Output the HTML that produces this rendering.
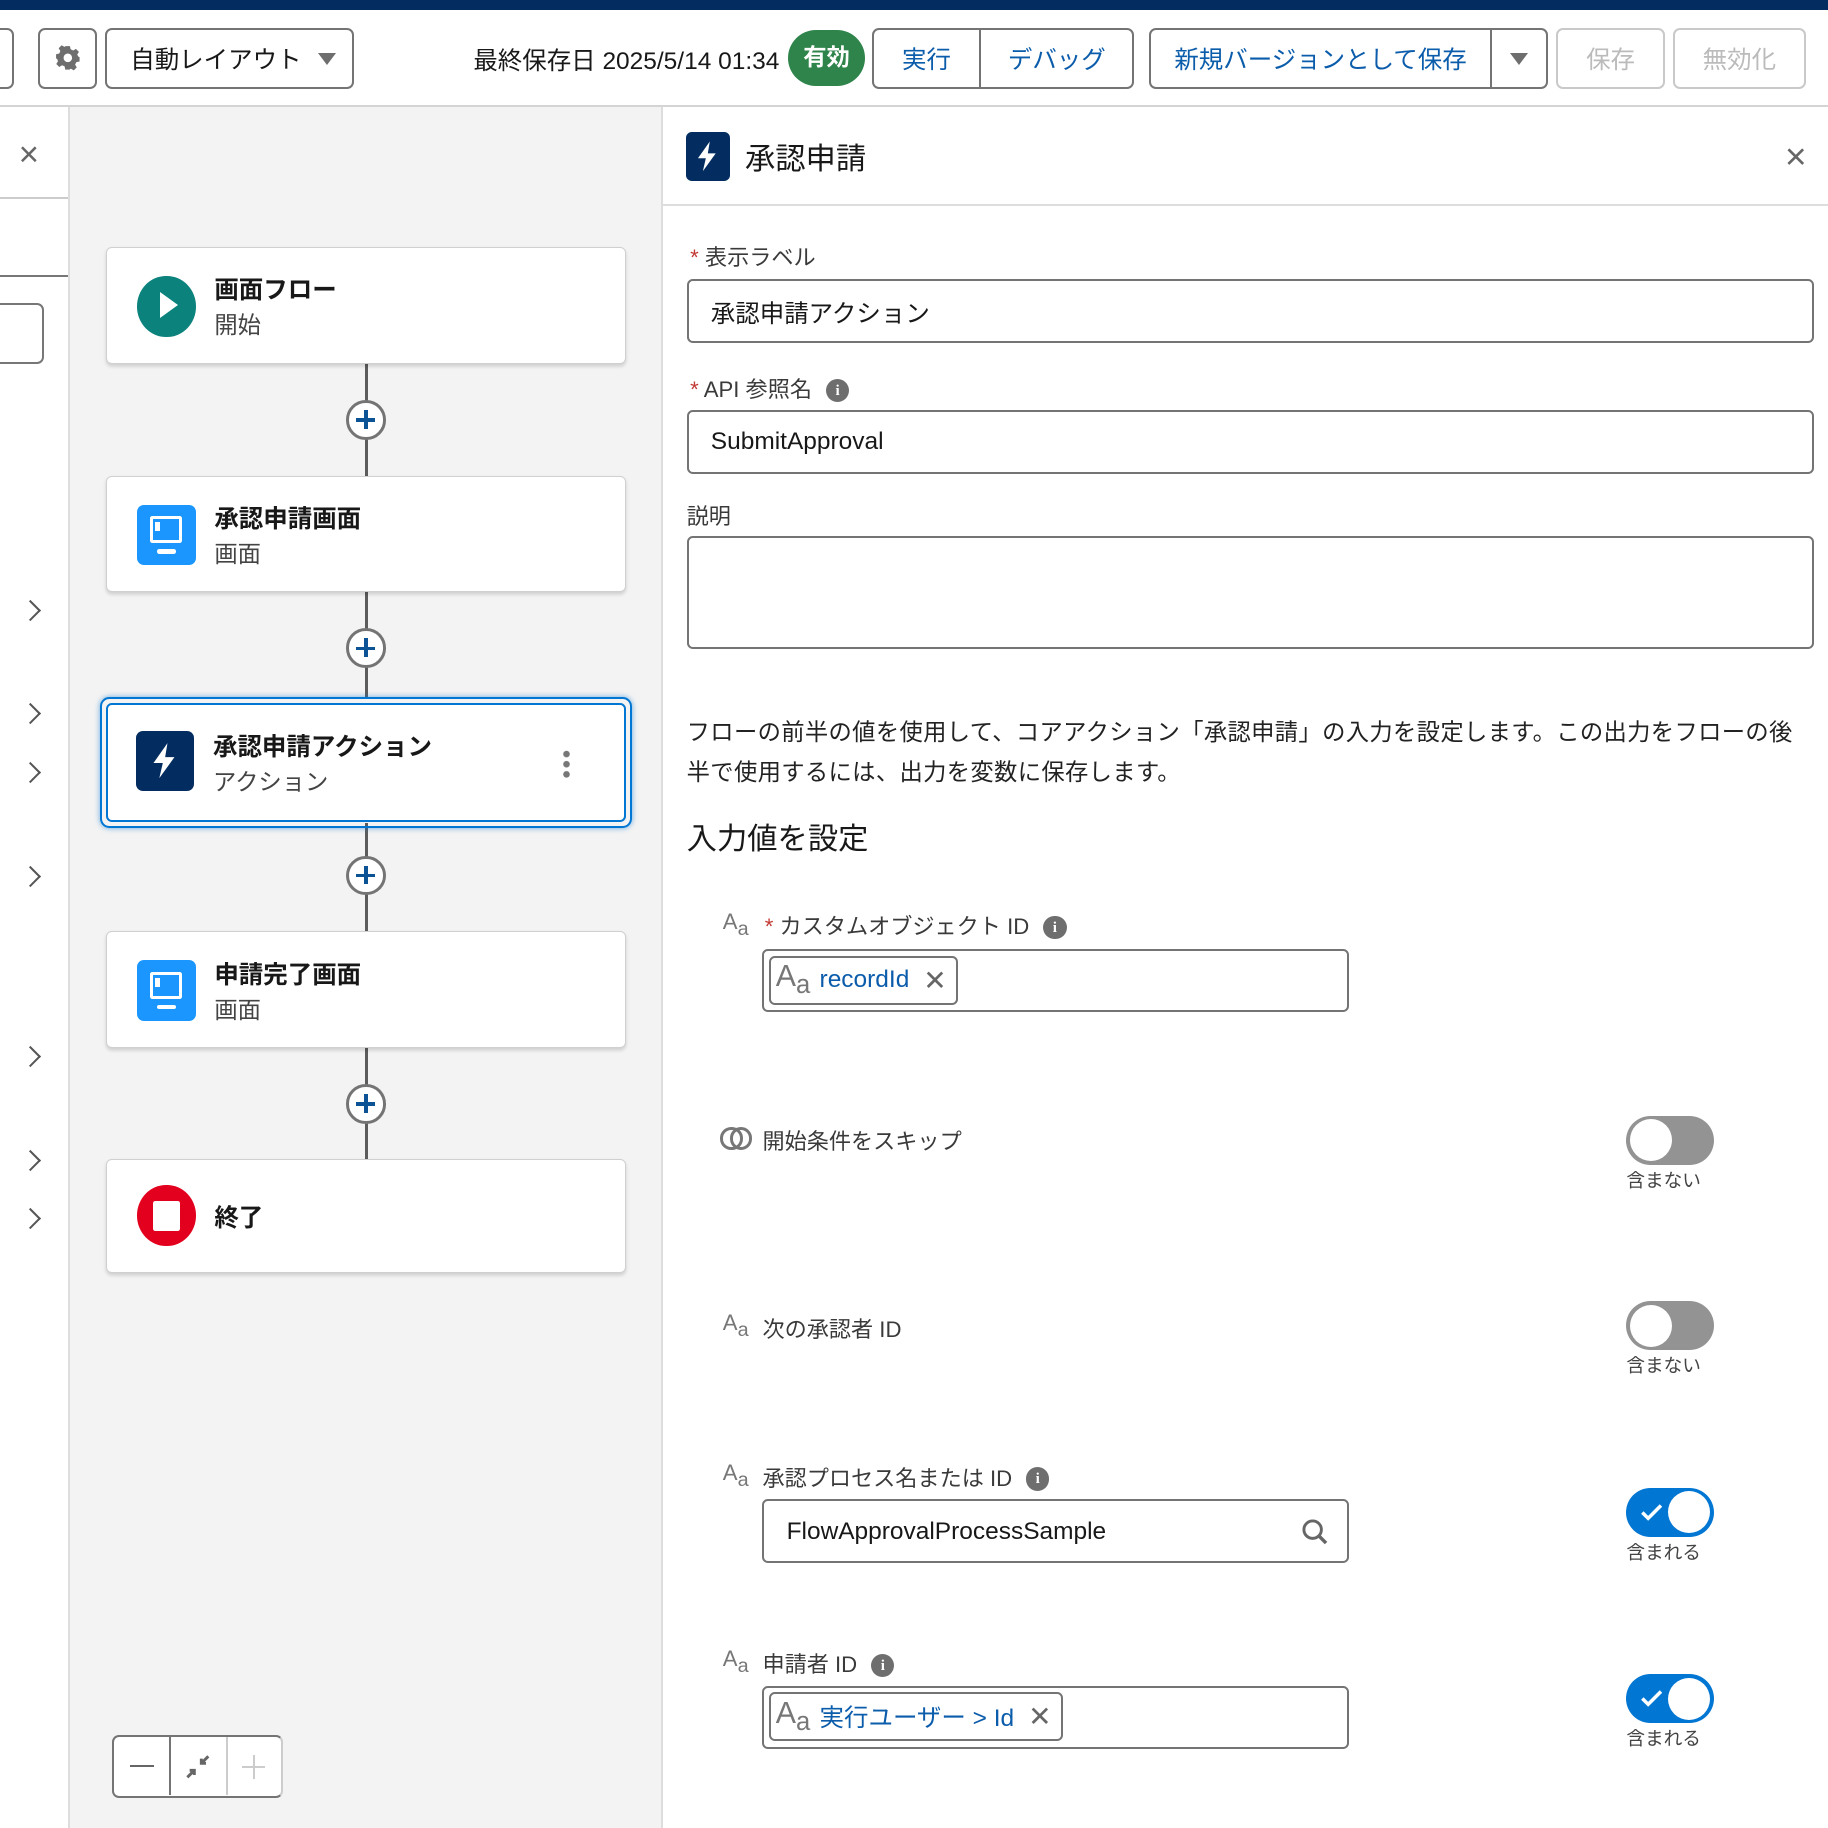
<!DOCTYPE html>
<html><head><meta charset="utf-8"><style>
html,body{margin:0;padding:0;width:1828px;height:1828px;overflow:hidden;background:#fff}
#w{zoom:1.16582;position:relative;width:1568px;height:1568px;font-family:"Liberation Sans","Noto Sans CJK JP",sans-serif;color:#181818}
.a{position:absolute}
.btn{position:absolute;border:2px solid #747474;border-radius:6px;background:#fff;box-sizing:border-box;display:flex;align-items:center;justify-content:center;font-size:21px}
.card{position:absolute;left:91px;width:446px;height:100px;background:#fff;border:1px solid #d0d0d0;border-radius:5px;box-shadow:0 2px 3px rgba(0,0,0,.15);box-sizing:border-box}
.card .t{position:absolute;left:92px;top:20px;font-size:21px;font-weight:bold}
.card .s{position:absolute;left:92px;top:50px;font-size:20px;color:#444}
.ic{position:absolute;left:26px;top:24px;width:50px;height:52px;border-radius:6px}
.line{position:absolute;left:313px;width:3px;background:#5c5c5c}
.plus{position:absolute;left:297px;width:34px;height:34px;border:3px solid #747474;border-radius:50%;background:#fff;box-sizing:border-box}
.plus:before{content:"";position:absolute;left:6px;top:13px;width:16px;height:3px;background:#0b5394}
.plus:after{content:"";position:absolute;left:13px;top:6px;width:3px;height:16px;background:#0b5394}
.chev{position:absolute;left:24px;width:11px;height:11px;border-right:2px solid #555;border-top:2px solid #555;transform:rotate(45deg)}
.inp{position:absolute;border:2px solid #747474;border-radius:5px;box-sizing:border-box;background:#fff}
.lbl{position:absolute;font-size:19px;color:#3a3a3a}
.aa{position:absolute;font-size:19px;color:#777}
.aa sub{font-size:17px;vertical-align:-5px}
.info{display:inline-block;width:20px;height:20px;border-radius:50%;background:#6e6e6e;color:#fff;font-size:13px;font-weight:bold;text-align:center;line-height:20px;vertical-align:2px;margin-left:12px;font-family:"Liberation Serif",serif}
.tg{position:absolute;left:1395px;width:75px;height:42px;border-radius:21px;background:#939393}
.tg:after{content:"";position:absolute;left:3px;top:3px;width:36px;height:36px;border-radius:50%;background:#fff}
.tg.on{background:#0176d3}
.tg.on:after{left:36px}
.tl{position:absolute;left:1395px;font-size:16px;color:#444}
.pill{position:absolute;left:4px;top:4px;height:42px;border:2px solid #747474;border-radius:5px;box-sizing:border-box;display:flex;align-items:center;padding:0 8px 0 4px;font-size:21px;color:#0b5cab}
.pill .A{color:#777;font-size:26px;margin-right:8px}
.pill .A sub{font-size:22px;vertical-align:-6px}
.pill .x{color:#666;margin-left:12px;font-size:24px}
</style></head><body><div id="w">
<div class="a" style="left:0;top:0;width:1568px;height:9px;background:#032d60"></div>
<div class="a" style="left:0;top:90px;width:1568px;height:2px;background:#d4d4d4"></div>
<div class="btn" style="left:-10px;top:24px;width:22px;height:52px"></div>
<div class="btn" style="left:33px;top:24px;width:50px;height:52px"><svg width="22" height="22" viewBox="0 0 24 24"><path fill="#6e6e6e" d="M10 1h4l.6 3 2.4 1.2 2.6-1.6 2.8 2.8-1.6 2.6L22 11v0l1 .4v4l-3 .6-1.2 2.4 1.6 2.6-2.8 2.8-2.6-1.6L14 22.6 13.6 23h-4l-.6-3-2.4-1-2.6 1.6-2.8-2.8 1.6-2.6L2 13l-1-.4v-4l3-.6 1-2.4-1.6-2.6L6.2 .2l2.6 1.6zM12 8a4 4 0 100 8 4 4 0 000-8z"/></svg></div>
<div class="btn" style="left:90px;top:24px;width:214px;height:52px;justify-content:flex-start;padding-left:20px">自動レイアウト<span style="position:absolute;right:14px;top:20px;border-left:8px solid transparent;border-right:8px solid transparent;border-top:11px solid #6e6e6e"></span></div>
<div class="a" style="left:406px;top:36px;font-size:21px">最終保存日 2025/5/14 01:34</div>
<div class="a" style="left:676px;top:26px;width:66px;height:48px;border-radius:24px;background:#2e844a;color:#fff;font-weight:bold;font-size:20px;text-align:center;line-height:48px">有効</div>
<div class="btn" style="left:748px;top:24px;width:225px;height:52px;color:#0b5cab;justify-content:flex-start"><span style="width:90px;text-align:center">実行</span><span style="width:2px;height:52px;background:#747474"></span><span style="flex:1;text-align:center">デバッグ</span></div>
<div class="btn" style="left:986px;top:24px;width:342px;height:52px;color:#0b5cab;justify-content:flex-start"><span style="width:290px;text-align:center">新規バージョンとして保存</span><span style="width:2px;height:52px;background:#747474"></span><span style="position:absolute;right:16px;top:20px;border-left:8px solid transparent;border-right:8px solid transparent;border-top:11px solid #6e6e6e"></span></div>
<div class="btn" style="left:1335px;top:24px;width:93px;height:52px;border-color:#c9c9c9;color:#bbb">保存</div>
<div class="btn" style="left:1435px;top:24px;width:114px;height:52px;border-color:#c9c9c9;color:#bbb">無効化</div>
<div class="a" style="left:16px;top:116px;font-size:30px;color:#666">×</div>
<div class="a" style="left:0;top:169px;width:58px;height:2px;background:#ccc"></div>
<div class="a" style="left:0;top:236px;width:58px;height:2px;background:#777"></div>
<div class="a" style="left:-10px;top:260px;width:48px;height:52px;border:2px solid #777;border-radius:6px;box-sizing:border-box"></div>
<div class="chev" style="top:517px;left:20px"></div><div class="chev" style="top:606px;left:20px"></div><div class="chev" style="top:656px;left:20px"></div><div class="chev" style="top:745px;left:20px"></div><div class="chev" style="top:900px;left:20px"></div><div class="chev" style="top:989px;left:20px"></div><div class="chev" style="top:1039px;left:20px"></div>
<div class="a" style="left:58px;top:92px;width:511px;height:1476px;background:#f3f3f3;border-left:2px solid #ddd;border-right:2px solid #ddd;box-sizing:border-box"></div>
<div class="line" style="top:312px;height:96px"></div>
<div class="line" style="top:508px;height:92px"></div>
<div class="line" style="top:706px;height:94px"></div>
<div class="line" style="top:898px;height:96px"></div>
<div class="plus" style="top:343px"></div><div class="plus" style="top:539px"></div><div class="plus" style="top:734px"></div><div class="plus" style="top:930px"></div>
<div class="card" style="top:212px"><div class="ic" style="left:26px;width:50px;height:52px;border-radius:50%;background:#0b827c"><div style="position:absolute;left:19px;top:14px;border-top:12px solid transparent;border-bottom:12px solid transparent;border-left:16px solid #fff"></div></div><div class="t">画面フロー</div><div class="s">開始</div></div>
<div class="card" style="top:408px"><div class="ic" style="background:#1b96ff"><div style="position:absolute;left:11px;top:10px;width:22px;height:18px;border:3px solid #fff;border-radius:2px"></div><div style="position:absolute;left:15px;top:15px;width:4px;height:8px;background:#fff"></div><div style="position:absolute;left:17px;top:38px;width:16px;height:4px;background:#fff;border-radius:2px"></div></div><div class="t">承認申請画面</div><div class="s">画面</div></div>
<div class="a" style="left:86px;top:598px;width:456px;height:112px;border:2px solid #0176d3;border-radius:8px;box-shadow:0 0 5px rgba(1,118,211,.6);box-sizing:border-box"></div>
<div class="card" style="top:603px;left:91px;width:446px;height:102px;border:2px solid #0176d3;box-shadow:none"><div class="ic" style="background:#032d60;width:50px;height:52px;top:22px;left:24px"><svg class="a" style="left:12px;top:10px" width="26" height="32" viewBox="0 0 26 32"><path fill="#fff" d="M15 1L3 18h8l-3 13 13-18h-8z"/></svg></div><div class="t" style="top:20px;left:90px">承認申請アクション</div><div class="s" style="top:50px;left:90px">アクション</div><div class="a" style="left:390px;top:38px;width:6px;height:26px;background:radial-gradient(circle,#777 2.6px,transparent 3px) 0 0/6px 8.7px"></div></div>
<div class="card" style="top:799px"><div class="ic" style="background:#1b96ff"><div style="position:absolute;left:11px;top:10px;width:22px;height:18px;border:3px solid #fff;border-radius:2px"></div><div style="position:absolute;left:15px;top:15px;width:4px;height:8px;background:#fff"></div><div style="position:absolute;left:17px;top:38px;width:16px;height:4px;background:#fff;border-radius:2px"></div></div><div class="t">申請完了画面</div><div class="s">画面</div></div>
<div class="card" style="top:994px;height:98px"><div class="ic" style="border-radius:50%;background:#e3001e;top:22px"><div style="position:absolute;left:13px;top:13px;width:24px;height:26px;background:#fff;border-radius:2px"></div></div><div class="t" style="top:34px">終了</div></div>
<div class="a" style="left:96px;top:1488px;width:147px;height:54px;border:2px solid #747474;border-right-color:#ccc;border-radius:6px;background:#fff;box-sizing:border-box"><div class="a" style="left:47px;top:0;width:2px;height:50px;background:#747474"></div><div class="a" style="left:96px;top:0;width:2px;height:50px;background:#ccc"></div><div class="a" style="left:14px;top:24px;width:20px;height:2px;background:#666"></div><svg class="a" style="left:61px;top:15px" width="22" height="22" viewBox="0 0 22 22"><path d="M20 2l-6 6M14 4v4h4M2 20l6-6M8 18v-4H4" fill="none" stroke="#666" stroke-width="2.5"/></svg><div class="a" style="left:110px;top:25px;width:20px;height:2px;background:#ccc"></div><div class="a" style="left:119px;top:16px;width:2px;height:20px;background:#ccc"></div></div>
<div class="a" style="left:588px;top:113px;width:38px;height:42px;border-radius:5px;background:#032d60"><svg class="a" style="left:8px;top:7px" width="22" height="28" viewBox="0 0 26 32"><path fill="#fff" d="M15 1L3 18h8l-3 13 13-18h-8z"/></svg></div>
<div class="a" style="left:639px;top:115px;font-size:26px">承認申請</div>
<div class="a" style="left:1531px;top:116px;font-size:32px;color:#666">×</div>
<div class="a" style="left:569px;top:175px;width:999px;height:2px;background:#ddd"></div>
<div class="lbl" style="left:592px;top:206px"><span style="color:#c23934">*</span> 表示ラベル</div>
<div class="inp" style="left:589px;top:239px;width:967px;height:55px"><span class="a" style="left:19px;top:12px;font-size:21px">承認申請アクション</span></div>
<div class="lbl" style="left:592px;top:319px"><span style="color:#c23934">*</span> API 参照名<span class="info">i</span></div>
<div class="inp" style="left:589px;top:352px;width:967px;height:55px"><span class="a" style="left:19px;top:13px;font-size:21px">SubmitApproval</span></div>
<div class="lbl" style="left:589px;top:428px">説明</div>
<div class="inp" style="left:589px;top:460px;width:967px;height:97px"></div>
<div class="a" style="left:589px;top:612px;font-size:20px;line-height:34px;color:#222;width:960px;letter-spacing:0.3px">フローの前半の値を使用して、コアアクション「承認申請」の入力を設定します。この出力をフローの後半で使用するには、出力を変数に保存します。</div>
<div class="a" style="left:589px;top:698px;font-size:26px">入力値を設定</div>
<div class="aa" style="left:620px;top:780px">A<sub>a</sub></div>
<div class="lbl" style="left:656px;top:780px"><span style="color:#c23934">*</span> カスタムオブジェクト ID<span class="info">i</span></div>
<div class="inp" style="left:654px;top:814px;width:503px;height:54px"><div class="pill"><span class="A">A<sub>a</sub></span>recordId<span class="x">✕</span></div></div>
<div class="a" style="left:618px;top:967px;width:14px;height:14px;border:3px solid #777;border-radius:50%"></div><div class="a" style="left:626px;top:967px;width:14px;height:14px;border:3px solid #777;border-radius:50%"></div>
<div class="lbl" style="left:654px;top:964px">開始条件をスキップ</div>
<div class="tg" style="top:957px"></div><div class="tl" style="top:1000px">含まない</div>
<div class="aa" style="left:620px;top:1124px">A<sub>a</sub></div>
<div class="lbl" style="left:654px;top:1125px">次の承認者 ID</div>
<div class="tg" style="top:1116px"></div><div class="tl" style="top:1159px">含まない</div>
<div class="aa" style="left:620px;top:1252px">A<sub>a</sub></div>
<div class="lbl" style="left:654px;top:1253px">承認プロセス名または ID<span class="info">i</span></div>
<div class="inp" style="left:654px;top:1286px;width:503px;height:55px"><span class="a" style="left:19px;top:14px;font-size:21px">FlowApprovalProcessSample</span><svg class="a" style="left:460px;top:14px" width="24" height="24" viewBox="0 0 24 24"><circle cx="10" cy="10" r="7.5" fill="none" stroke="#666" stroke-width="2.5"/><path d="M15.5 15.5l6 6" stroke="#666" stroke-width="3"/></svg></div>
<div class="tg on" style="top:1276px"><svg class="a" style="left:12px;top:12px" width="20" height="18" viewBox="0 0 20 18"><path d="M2 9l5 5 11-11" fill="none" stroke="#fff" stroke-width="3"/></svg></div><div class="tl" style="top:1319px">含まれる</div>
<div class="aa" style="left:620px;top:1412px">A<sub>a</sub></div>
<div class="lbl" style="left:654px;top:1413px">申請者 ID<span class="info">i</span></div>
<div class="inp" style="left:654px;top:1446px;width:503px;height:54px"><div class="pill"><span class="A">A<sub>a</sub></span>実行ユーザー &gt; Id<span class="x">✕</span></div></div>
<div class="tg on" style="top:1436px"><svg class="a" style="left:12px;top:12px" width="20" height="18" viewBox="0 0 20 18"><path d="M2 9l5 5 11-11" fill="none" stroke="#fff" stroke-width="3"/></svg></div><div class="tl" style="top:1479px">含まれる</div>
</div></body></html>
